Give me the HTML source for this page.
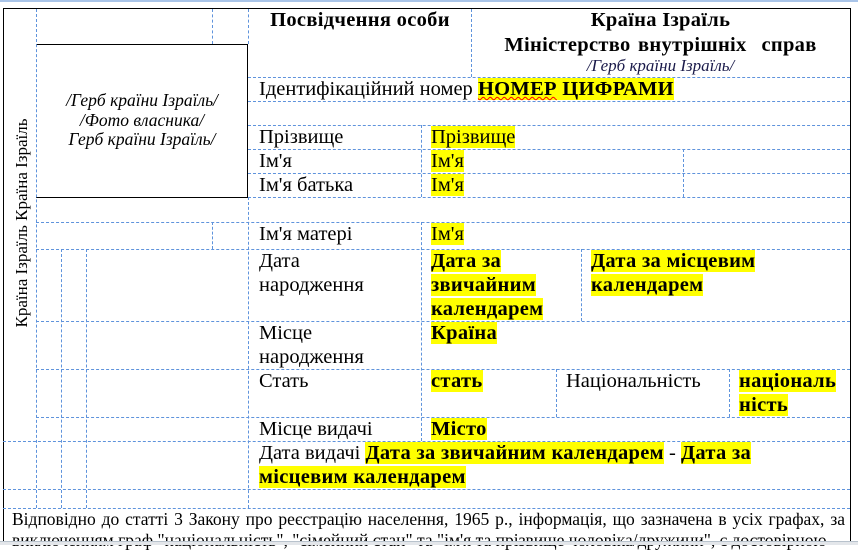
<!DOCTYPE html>
<html><head><meta charset="utf-8">
<style>
body{margin:0;width:858px;height:544px;overflow:hidden;background:#fff;position:relative;font-family:"Liberation Serif","Noto Serif CJK SC",serif;color:#000}
div{position:absolute}
.h{height:0;border-top:1px dashed #5f93dc}
.v{width:0;border-left:1px dashed #5f93dc}
.t{font-size:20.5px;line-height:24px;white-space:nowrap}
.b{font-weight:bold;letter-spacing:0.3px}
.y{background:#ffff00}
</style></head><body>
<div style="left:0;top:0;width:858px;height:2px;background:#a9c4e8"></div>
<div style="left:3px;top:8px;width:848px;height:0;border-top:1.5px solid #000"></div>
<div style="left:3px;top:8px;width:0;height:536px;border-left:1.5px solid #000"></div>
<div style="left:850px;top:8px;width:0;height:536px;border-left:1.5px solid #000"></div>
<div style="left:36px;top:44px;width:211px;height:152px;border:1px solid #000;border-left:none"></div>

<div class="v" style="left:36px;top:9px;height:499px"></div>
<div class="v" style="left:212px;top:9px;height:35px"></div>
<div class="v" style="left:212px;top:222px;height:27px"></div>
<div class="v" style="left:248px;top:9px;height:35px"></div>
<div class="v" style="left:248px;top:197px;height:311px"></div>
<div class="v" style="left:471px;top:9px;height:68px"></div>
<div class="v" style="left:421px;top:125px;height:72px"></div>
<div class="v" style="left:421px;top:222px;height:219px"></div>
<div class="v" style="left:683px;top:149px;height:48px"></div>
<div class="v" style="left:581px;top:249px;height:72px"></div>
<div class="v" style="left:556px;top:369px;height:48px"></div>
<div class="v" style="left:729px;top:369px;height:48px"></div>
<div class="v" style="left:61px;top:249px;height:259px"></div>
<div class="v" style="left:86px;top:249px;height:259px"></div>

<div class="h" style="left:248px;top:77px;width:602px"></div>
<div class="h" style="left:248px;top:101px;width:602px"></div>
<div class="h" style="left:248px;top:125px;width:602px"></div>
<div class="h" style="left:248px;top:149px;width:602px"></div>
<div class="h" style="left:248px;top:173px;width:602px"></div>
<div class="h" style="left:248px;top:197px;width:602px"></div>
<div class="h" style="left:36px;top:222px;width:814px"></div>
<div class="h" style="left:36px;top:249px;width:814px"></div>
<div class="h" style="left:36px;top:321px;width:814px"></div>
<div class="h" style="left:36px;top:369px;width:814px"></div>
<div class="h" style="left:36px;top:417px;width:814px"></div>
<div class="h" style="left:3px;top:441px;width:847px"></div>
<div class="h" style="left:3px;top:489px;width:847px"></div>
<div class="h" style="left:3px;top:508px;width:847px"></div>

<div style="left:22px;top:223px;width:0;height:0"><div style="left:-130px;top:-11px;width:260px;font-size:17px;line-height:22px;text-align:center;transform:rotate(-90deg);white-space:nowrap">Країна Ізраїль Країна Ізраїль</div></div>

<div style="left:36px;top:91px;width:212px;text-align:center;font-style:italic;font-size:17.5px;line-height:19.5px;white-space:nowrap">/Герб країни Ізраїль/<br>/Фото власника/<br>Герб країни Ізраїль/</div>

<div class="t b" style="left:249px;top:8px;width:222px;text-align:center">Посвідчення особи</div>
<div class="t b" style="left:471px;top:8px;width:379px;text-align:center">Країна Ізраїль</div>
<div class="t b" style="left:471px;top:33px;width:379px;text-align:center;word-spacing:2px">Міністерство внутрішніх&nbsp; справ</div>
<div style="left:471px;top:56px;width:379px;text-align:center;font-style:italic;font-size:17px;line-height:20px;color:#1a1a4a">/Герб країни Ізраїль/</div>

<div class="t" style="left:259px;top:77px">Ідентифікаційний номер <span class="y b"><span style="text-decoration:underline wavy red;text-decoration-thickness:1px">НОМЕР</span> ЦИФРАМИ</span></div>

<div class="t" style="left:259px;top:125px">Прізвище</div>
<div class="t" style="left:431px;top:125px"><span class="y">Прізвище</span></div>
<div class="t" style="left:259px;top:149px">Ім'я</div>
<div class="t" style="left:431px;top:149px"><span class="y">Ім'я</span></div>
<div class="t" style="left:259px;top:173px">Ім'я батька</div>
<div class="t" style="left:431px;top:173px"><span class="y">Ім'я</span></div>
<div class="t" style="left:259px;top:222px">Ім'я матері</div>
<div class="t" style="left:431px;top:222px"><span class="y">Ім'я</span></div>

<div class="t" style="left:259px;top:249px">Дата<br>народження</div>
<div class="t b" style="left:431px;top:249px"><span class="y">Дата за</span><br><span class="y">звичайним</span><br><span class="y">календарем</span></div>
<div class="t b" style="left:591px;top:249px"><span class="y">Дата за місцевим</span><br><span class="y">календарем</span></div>

<div class="t" style="left:259px;top:321px">Місце<br>народження</div>
<div class="t b" style="left:431px;top:321px"><span class="y">Країна</span></div>

<div class="t" style="left:259px;top:369px">Стать</div>
<div class="t b" style="left:431px;top:369px"><span class="y">стать</span></div>
<div class="t" style="left:566px;top:369px">Національність</div>
<div class="t b" style="left:739px;top:369px"><span class="y">національ</span><br><span class="y">ність</span></div>

<div class="t" style="left:259px;top:417px">Місце видачі</div>
<div class="t b" style="left:431px;top:417px"><span class="y">Місто</span></div>

<div class="t" style="left:259px;top:441px">Дата видачі <span class="b y">Дата за звичайним календарем</span> - <span class="b y">Дата за</span><br><span class="b y">місцевим календарем</span></div>

<div style="left:12px;top:509px;width:833px;font-size:17.5px;line-height:21px;text-align:justify;text-align-last:justify;white-space:nowrap">Відповідно до статті 3 Закону про реєстрацію населення, 1965 р., інформація, що зазначена в усіх графах, за</div>
<div style="left:12px;top:530px;width:833px;font-size:17.5px;line-height:21px;white-space:nowrap">виключенням граф "національність", "сімейний стан" та "ім'я та прізвище чоловіка/дружини", є достовірною</div>

<div style="left:0;top:541px;width:858px;height:3px;background:#e3e6ea;border-top:1px solid #b8c2cc"></div>
</body></html>
